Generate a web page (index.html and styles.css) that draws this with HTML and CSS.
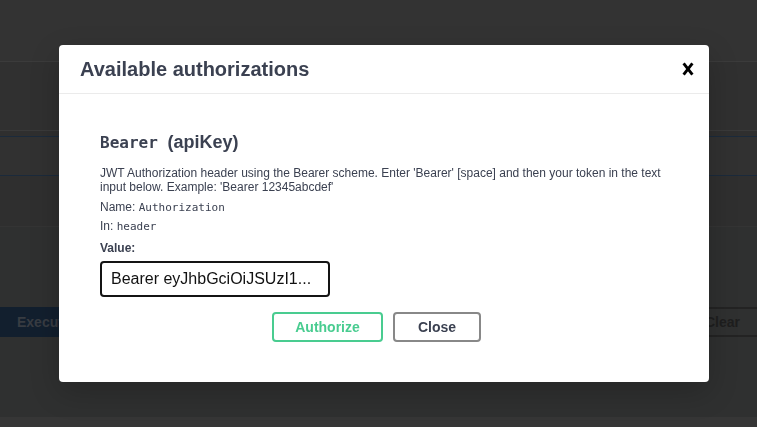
FILE: index.html
```html
<!DOCTYPE html>
<html lang="en">
<head>
<meta charset="utf-8">
<title>Available authorizations</title>
<link rel="stylesheet" href="styles.css">
</head>
<body>
<div class="page">
  <div class="band band-top"></div>
  <div class="band line-grey"></div>
  <div class="band band-a"></div>
  <div class="band line-grey2"></div>
  <div class="band band-b"></div>
  <div class="band line-blue"></div>
  <div class="band band-c"></div>
  <div class="band line-blue"></div>
  <div class="band band-d"></div>
  <div class="band line-grey3"></div>
  <div class="band band-e">
    <div class="exec-row">
      <div class="exec">Execute</div>
      <div class="clear">Clear</div>
    </div>
  </div>
  <div class="band band-bottom"></div>
</div>

<div class="backdrop">
  <div class="modal">
    <div class="modal-header">
      <h3 class="modal-title">Available authorizations</h3>
      <button class="close-btn" type="button" aria-label="Close">
        <svg width="20" height="20" viewBox="0 0 20 20"><path d="M5.6 4.3 L14.4 15.7 M14.4 4.3 L5.6 15.7" stroke="#000" stroke-width="2.9" stroke-linecap="butt" fill="none"/></svg>
      </button>
    </div>
    <div class="modal-body">
      <h4 class="scheme"><code class="scheme-code">Bearer&nbsp;</code>(apiKey)</h4>
      <p class="desc">JWT Authorization header using the Bearer scheme. Enter 'Bearer' [space] and then your token in the text input below. Example: 'Bearer 12345abcdef'</p>
      <p class="row row-name">Name: <code class="mono">Authorization</code></p>
      <p class="row row-in">In: <code class="mono">header</code></p>
      <p class="row row-label">Value:</p>
      <div class="value-input">Bearer eyJhbGciOiJSUzI1...</div>
      <div class="btns">
        <button class="btn btn-auth" type="button">Authorize</button>
        <button class="btn btn-done" type="button">Close</button>
      </div>
    </div>
  </div>
</div>
</body>
</html>
```

FILE: styles.css
```css
* { box-sizing: border-box; }

html, body {
  margin: 0;
  padding: 0;
  height: 100%;
  overflow: hidden;
}

body {
  background: #303030;
  font-family: "Liberation Sans", Arial, sans-serif;
}

.page {
  display: flex;
  flex-direction: column;
  height: 427px;
}

.band { flex: none; }
.band-top { height: 61px; background: #333333; }
.line-grey { height: 1px; background: #3b3b3b; }
.band-a { height: 68px; background: #303030; }
.line-grey2 { height: 1px; background: #3a3a3a; }
.band-b { height: 5px; background: #2f2f2f; }
.line-blue { height: 1px; background: #1b2a3b; }
.band-c { height: 38px; background: #313131; }
.band-d { height: 50px; background: #2f2f2f; }
.line-grey3 { height: 1px; background: #343434; }
.band-e {
  height: 190px;
  background: #2f3030;
  padding-top: 80px;
}
.band-bottom { flex: 1; background: #363636; }

.exec-row {
  display: flex;
  height: 30px;
}

.exec {
  flex: 1;
  background: #121f2e;
  color: #383c42;
  font-weight: bold;
  font-size: 14px;
  line-height: 30px;
  padding-left: 17px;
}

.clear {
  flex: 1;
  border-top: 2px solid #232323;
  border-bottom: 2px solid #232323;
  color: #1e1e1e;
  font-weight: bold;
  font-size: 14px;
  line-height: 26px;
  text-align: right;
  padding-right: 17px;
}

.backdrop {
  position: fixed;
  inset: 0;
  padding: 45px 0 0 59px;
}

.modal {
  width: 650px;
  background: #fff;
  border-radius: 4px;
  box-shadow: 0 10px 30px 0 rgba(0, 0, 0, 0.2);
  color: #3b4151;
}

.modal-header {
  display: flex;
  align-items: center;
  justify-content: space-between;
  padding: 12px 11px 12px 21px;
  border-bottom: 1px solid #ebebeb;
}

.modal-title {
  margin: 0;
  font-size: 20px;
  line-height: 24px;
  font-weight: bold;
  color: #3b4151;
}

.close-btn {
  border: 0;
  background: none;
  padding: 0;
  width: 20px;
  height: 20px;
  display: flex;
}

.modal-body {
  padding: 38px 40px 40px 41px;
}

.scheme {
  margin: 0;
  font-size: 18px;
  line-height: 20px;
  font-weight: bold;
  color: #3b4151;
}

.scheme-code {
  font-family: "DejaVu Sans Mono", "Liberation Mono", monospace;
  font-size: 16px;
  font-weight: bold;
  line-height: 1;
}

.desc {
  margin: 14px 0 0;
  font-size: 12px;
  line-height: 14px;
}

.row {
  margin: 0;
  font-size: 12px;
  line-height: 14px;
}

.row-name { margin-top: 6px; }
.row-in { margin-top: 5px; }
.row-label { margin-top: 8px; font-weight: bold; }

.mono {
  font-family: "DejaVu Sans Mono", "Liberation Mono", monospace;
  font-size: 11px;
  line-height: 1;
}

.value-input {
  margin-top: 6px;
  width: 230px;
  height: 36px;
  border: 2px solid #141414;
  border-radius: 4px;
  padding: 0 9px;
  font-size: 16px;
  line-height: 32px;
  color: #111;
  white-space: nowrap;
  overflow: hidden;
}

.btns {
  margin-top: 15px;
  display: flex;
  justify-content: center;
  gap: 10px;
  padding-right: 16px;
}

.btn {
  font-family: "Liberation Sans", Arial, sans-serif;
  font-size: 14px;
  font-weight: bold;
  line-height: 16px;
  padding: 5px 0;
  border-radius: 4px;
  background: #fff;
  text-align: center;
}

.btn-auth {
  width: 111px;
  border: 2px solid #49cc90;
  color: #49cc90;
}

.btn-done {
  width: 88px;
  border: 2px solid #888888;
  color: #3b4151;
}
```
